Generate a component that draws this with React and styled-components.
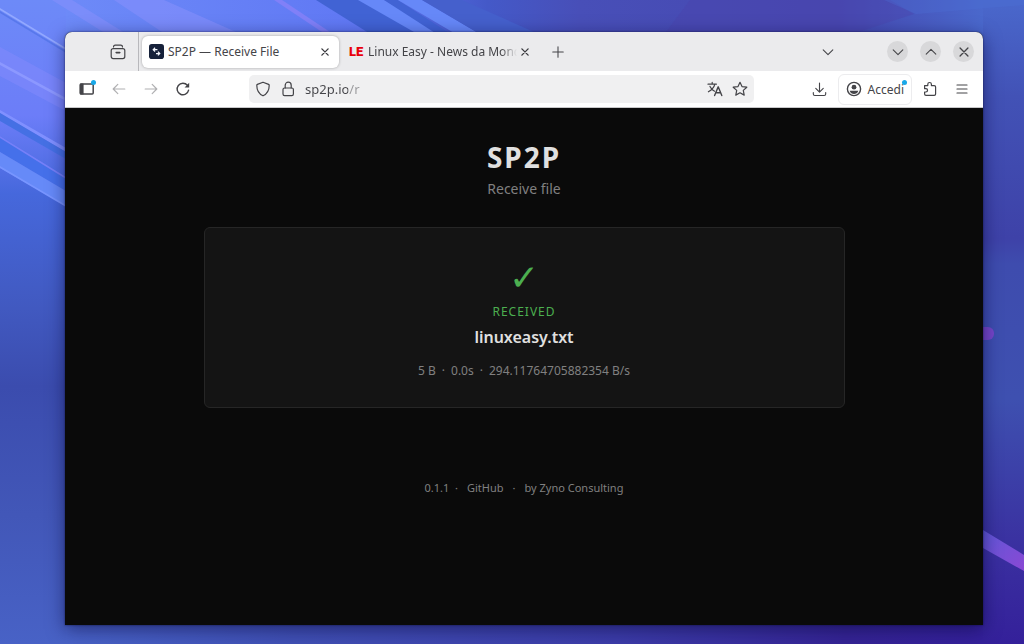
import React from "react";
import styled, { createGlobalStyle, css } from "styled-components";

const GlobalStyle = createGlobalStyle`
  * {
    box-sizing: border-box;
  }

  body {
    margin: 0;
    font-family: "Noto Sans", "Open Sans", sans-serif;
  }

  button,
  input {
    font-family: inherit;
  }
`;

export default function App() {
  return (
    <Desktop>
      <GlobalStyle />
      <Wallpaper />
      <BrowserWindow>
        <TabBar />
        <NavBar />
        <ReceivePage />
      </BrowserWindow>
    </Desktop>
  );
}

const TabBar = () => {
  return (
    <TabStrip>
      <RecentArea>
        <IconButton aria-label="Recent browsing">
          <Icon>
            <path d="M3.5 3q0-1.800 1.800-1.800h5.400q1.800 0 1.800 1.800" />
            <rect x="1.200" y="4.600" width="13.600" height="10" rx="2" />
            <path d="M6.200 8.600h3.600" strokeWidth="1.600" />
          </Icon>
        </IconButton>
      </RecentArea>
      <Tab $active>
        <Favicon viewBox="0 0 16 16">
          <rect width="16" height="16" rx="3" fill="#16213a" />
          <path
            d="M4.500 6h4.500M6.500 4l-2 2 2 2M11.500 10.200H7.500M9.500 8.200l2 2-2 2"
            fill="none"
            stroke="#f2f4fa"
            strokeWidth="1.300"
          />
        </Favicon>
        <TabTitle>SP2P — Receive File</TabTitle>
        <CloseTab label="Close SP2P" />
      </Tab>
      <Tab>
        <LetterIcon>LE</LetterIcon>
        <TabTitle $faded>Linux Easy - News da Mond</TabTitle>
        <CloseTab label="Close Linux Easy" />
      </Tab>
      <IconButton aria-label="New tab">
        <Icon size={14}>
          <path d="M8 2v12M2 8h12" />
        </Icon>
      </IconButton>
      <TabTools>
        <IconButton aria-label="List all tabs">
          <Icon size={14}>
            <path d="M2.500 5.500L8 11l5.500-5.500" />
          </Icon>
        </IconButton>
        <WindowButtons>
          <WindowButton aria-label="Minimize">
            <Icon size={14}>
              <path d="M2.500 5.500L8 11l5.500-5.500" />
            </Icon>
          </WindowButton>
          <WindowButton aria-label="Maximize">
            <Icon size={14}>
              <path d="M2.500 10.500L8 5l5.500 5.500" />
            </Icon>
          </WindowButton>
          <WindowButton aria-label="Close window">
            <Icon size={14}>
              <path d="M3.500 3.500l9 9M12.500 3.500l-9 9" strokeWidth="1.500" />
            </Icon>
          </WindowButton>
        </WindowButtons>
      </TabTools>
    </TabStrip>
  );
};

const CloseTab = ({ label }) => {
  return (
    <CloseButton aria-label={label}>
      <Icon size={10}>
        <path d="M3 3l10 10M13 3L3 13" strokeWidth="2.200" />
      </Icon>
    </CloseButton>
  );
};

const NavBar = () => {
  return (
    <Toolbar>
      <NavGroup>
        <IconButton aria-label="Sidebar">
          <Icon>
            <rect x="1.200" y="3" width="13" height="10" rx="1" strokeWidth="1.500" />
            <path d="M1.500 3h2.500v10H1.500z" fill="currentColor" />
          </Icon>
          <Dot />
        </IconButton>
        <IconButton aria-label="Back" disabled>
          <Icon>
            <path d="M13.800 8H2.200M6.800 3.400L2.200 8l4.600 4.600" />
          </Icon>
        </IconButton>
        <IconButton aria-label="Forward" disabled>
          <Icon>
            <path d="M2.200 8h11.600M9.200 3.400L13.800 8l-4.600 4.600" />
          </Icon>
        </IconButton>
        <IconButton aria-label="Reload">
          <Icon>
            <path d="M13.600 9.200A5.800 5.800 0 1 1 12.400 4.300" strokeWidth="1.400" />
            <path d="M14.200 1.800v4.600H9.600z" fill="currentColor" stroke="none" />
          </Icon>
        </IconButton>
      </NavGroup>
      <UrlBar>
        <Icon>
          <path d="M8 1.200l5.600 2.200q.6.3.6 1C14.200 9 12 12.800 8 14.800 4 12.800 1.800 9 1.800 4.400q0-.7.6-1z" />
        </Icon>
        <Icon>
          <rect x="3" y="7" width="10.400" height="7.600" rx="1.600" />
          <path d="M5.200 7V4.200a3 3 0 0 1 6 0V7" />
        </Icon>
        <UrlInput aria-label="Address" defaultValue="sp2p.io/r" />
        <Icon>
          <path d="M1 3.200h8.400M5.200 1.400v1.800M7.800 3.400C7 6.600 4.600 9 1.400 10.800M3 5.400c1 2.200 2.600 3.800 4.600 4.800" />
          <path d="M7.600 14.600l3.600-8.800 3.600 8.800M8.800 11.800h4.800" strokeWidth="1.400" />
        </Icon>
        <Icon>
          <path d="M8 1.300l2 4.300 4.800.6-3.500 3.200.9 4.700L8 11.800l-4.200 2.300.9-4.700L1.200 6.200 6 5.600z" />
        </Icon>
      </UrlBar>
      <NavTools>
        <IconButton aria-label="Downloads">
          <Icon size={15}>
            <path d="M8 1v9.500M4 6.800l4 4 4-4M1.400 11.200v1.600q0 1.600 1.600 1.600h10q1.600 0 1.600-1.600v-1.600" />
          </Icon>
        </IconButton>
        <AccountButton>
          <Icon>
            <circle cx="8" cy="8" r="6.600" strokeWidth="1.400" />
            <circle cx="8" cy="6.200" r="2.400" fill="currentColor" stroke="none" />
            <path d="M3.600 9.800h8.800Q11 13 8 13T3.600 9.800z" fill="currentColor" stroke="none" />
          </Icon>
          Accedi
          <Dot />
        </AccountButton>
        <IconButton aria-label="Extensions">
          <Icon>
            <path d="M2.600 4.600h3.200V3.300a1.800 1.800 0 0 1 3.600 0v1.300h2.800q1.400 0 1.400 1.400v7q0 1.400-1.400 1.400H4Q2.600 14.400 2.600 13v-2h1.300a1.600 1.600 0 0 0 0-3.300H2.600z" />
          </Icon>
        </IconButton>
        <IconButton aria-label="Menu">
          <Icon>
            <path d="M3 4h10M3 8h10M3 12h10" />
          </Icon>
        </IconButton>
      </NavTools>
    </Toolbar>
  );
};

const ReceivePage = () => {
  return (
    <Page>
      <Title>SP2P</Title>
      <Subtitle>Receive file</Subtitle>
      <Card>
        <CheckMark>✓</CheckMark>
        <Status>Received</Status>
        <FileName>linuxeasy.txt</FileName>
        <Stats>
          <span>5 B</span>
          <span>·</span>
          <span>0.0s</span>
          <span>·</span>
          <span>294.11764705882354 B/s</span>
        </Stats>
      </Card>
      <Footer>
        <span>0.1.1 &nbsp;·</span>
        <FooterLink href="#github">GitHub</FooterLink>
        <span>·</span>
        <FooterLink href="#zyno">by Zyno Consulting</FooterLink>
      </Footer>
    </Page>
  );
};

const Wallpaper = () => {
  return (
    <Backdrop viewBox="0 0 1024 644" preserveAspectRatio="none" aria-hidden="true">
      <defs>
        <linearGradient id="left" x1="0" y1="0" x2="0" y2="1">
          <stop offset="0" stopColor="#6d8af8" />
          <stop offset="0.18" stopColor="#6c7df8" />
          <stop offset="0.3" stopColor="#4668dc" />
          <stop offset="0.48" stopColor="#4159c0" />
          <stop offset="0.6" stopColor="#3b4cae" />
          <stop offset="0.8" stopColor="#4257b8" />
          <stop offset="1" stopColor="#4862c6" />
        </linearGradient>
        <linearGradient id="right" x1="0" y1="0" x2="0" y2="1">
          <stop offset="0" stopColor="#4a68cc" />
          <stop offset="0.15" stopColor="#4252b6" />
          <stop offset="0.37" stopColor="#3e42a8" />
          <stop offset="0.41" stopColor="#3e4cae" />
          <stop offset="0.62" stopColor="#3e50b0" />
          <stop offset="0.85" stopColor="#3a30a0" />
          <stop offset="1" stopColor="#34209a" />
        </linearGradient>
        <linearGradient id="top" x1="0" y1="0" x2="1" y2="0">
          <stop offset="0" stopColor="#6d8af8" />
          <stop offset="0.32" stopColor="#6078f4" />
          <stop offset="0.46" stopColor="#4459c8" />
          <stop offset="0.56" stopColor="#484fb8" />
          <stop offset="0.84" stopColor="#4648b0" />
          <stop offset="1" stopColor="#4a68cc" />
        </linearGradient>
        <linearGradient id="bottom" x1="0" y1="0" x2="1" y2="0">
          <stop offset="0" stopColor="#4862c6" />
          <stop offset="0.25" stopColor="#4050b4" />
          <stop offset="0.6" stopColor="#3c3ca8" />
          <stop offset="0.85" stopColor="#352494" />
          <stop offset="1" stopColor="#34209a" />
        </linearGradient>
        <linearGradient id="ray" x1="0" y1="0" x2="1" y2="1">
          <stop offset="0" stopColor="#5f58d8" />
          <stop offset="1" stopColor="#8a48d4" />
        </linearGradient>
      </defs>
      <rect width="512" height="644" fill="url(#left)" />
      <rect x="512" width="512" height="644" fill="url(#right)" />
      <rect x="66" width="917" height="60" fill="url(#top)" />
      <rect x="66" y="600" width="917" height="44" fill="url(#bottom)" />
      <path d="M316 0h44l70 40h-50z" fill="#4163d4" />
      <path d="M358 0h26l70 40h-26z" fill="#6688f8" />
      <path d="M384 0h14l62 40h-14z" fill="#4163d4" />
      <path d="M398 0h24l68 40h-24z" fill="#6688f8" />
      <path d="M422 0h40l90 40h-62z" fill="#4560cc" />
      <path d="M114 0h50l90 40h-80zM52 0h20l64 40h-20z" fill="#8590fc" opacity="0.6" />
      <path d="M274 0h8l60 40h-8z" fill="#8080f8" />
      <path d="M0 8l66 40v2L0 10z" fill="#92a8ff" />
      <path d="M0 11l66 40v2L0 13z" fill="#5878ec" />
      <path d="M0 47l66 36v28L0 76z" fill="#8088fc" opacity="0.6" />
      <path d="M0 62l66 36v3L0 65z" fill="#8c98ff" />
      <path d="M0 110l66 38v4L0 113z" fill="#8090ff" />
      <path d="M0 113l66 39v7L0 121z" fill="#4570e4" />
      <path d="M0 136l66 41v14L0 152z" fill="#4570ea" />
      <path d="M0 136l66 41v2L0 138z" fill="#7680f8" />
      <path d="M0 152l66 39v15L0 168z" fill="#668af8" />
      <path d="M0 166l66 39v2L0 168z" fill="#7895ff" />
      <path d="M690 0h200l24 14-80 26H660z" fill="#4b43ac" opacity="0.4" />
      <path d="M1024 0v5l-108 9L884 0z" fill="#4c70d8" opacity="0.3" />
      <rect x="960" y="327" width="34" height="13" rx="6" fill="#7546c8" />
      <path d="M983 530l41 25v16l-41-23z" fill="url(#ray)" />
    </Backdrop>
  );
};

const Icon = ({ size = 16, children }) => {
  return (
    <IconSvg viewBox="0 0 16 16" $size={size} aria-hidden="true">
      {children}
    </IconSvg>
  );
};

const Desktop = styled.div`
  position: relative;
  min-height: 100vh;
  display: flex;
  padding: 32px 41px 19px 65px;
  overflow: hidden;
  background: #4159c0;
`;

const Backdrop = styled.svg`
  position: absolute;
  inset: 0;
  width: 100%;
  height: 100%;
`;

const BrowserWindow = styled.main`
  position: relative;
  flex: 1;
  min-width: 0;
  display: flex;
  flex-direction: column;
  border-radius: 7px 7px 0 0;
  overflow: hidden;
  background: #0a0a0a;
  box-shadow: 0 0 2px rgba(10, 10, 50, 0.8), 0 4px 18px rgba(10, 10, 60, 0.55);
`;

const IconSvg = styled.svg`
  flex: none;
  display: block;
  width: ${({ $size }) => $size}px;
  height: ${({ $size }) => $size}px;
  fill: none;
  stroke: currentColor;
  stroke-width: 1.2;
  stroke-linecap: round;
  stroke-linejoin: round;
`;

const IconButton = styled.button`
  position: relative;
  flex: none;
  display: flex;
  align-items: center;
  justify-content: center;
  width: 32px;
  height: 32px;
  padding: 0;
  border: 0;
  background: none;
  color: #444448;

  &:disabled {
    color: #b0b0b2;
  }
`;

const Dot = styled.span`
  position: absolute;
  top: 7px;
  right: 7px;
  width: 5px;
  height: 5px;
  border-radius: 50%;
  background: #18a8e8;
`;

const TabStrip = styled.header`
  display: flex;
  align-items: center;
  height: 39px;
  background: #ebebed;
`;

const RecentArea = styled.div`
  display: flex;
  align-items: center;
  justify-content: flex-end;
  width: 74px;
  height: 100%;
  margin-right: 3px;
  padding-right: 4px;
  border-right: 1px solid #b8b8bc;
`;

const Tab = styled.div`
  display: flex;
  align-items: center;
  flex: 0 1 197px;
  min-width: 0;
  height: 32px;
  margin-right: 3px;
  padding: 0 6px 0 7px;
  border-radius: 6px;
  color: #444448;

  ${({ $active }) =>
    $active &&
    css`
      background: #ffffff;
      box-shadow: 0 0 3px rgba(0, 0, 0, 0.3);
    `}
`;

const TabTitle = styled.span`
  flex: 1;
  min-width: 0;
  margin-left: 4px;
  overflow: hidden;
  white-space: nowrap;
  font-size: 12px;
  line-height: 20px;

  ${({ $faded }) =>
    $faded &&
    css`
      mask-image: linear-gradient(to left, transparent, #000 16px);
    `}
`;

const Favicon = styled.svg`
  flex: none;
  width: 15px;
  height: 15px;
`;

const LetterIcon = styled.span`
  flex: none;
  width: 15px;
  color: #e8000c;
  font-family: Roboto, "Liberation Sans", sans-serif;
  font-size: 13px;
  font-weight: 900;
  line-height: 16px;
`;

const CloseButton = styled.button`
  flex: none;
  display: flex;
  align-items: center;
  justify-content: center;
  width: 16px;
  height: 16px;
  padding: 0;
  border: 0;
  background: none;
  color: #3c3c40;
`;

const TabTools = styled.div`
  display: flex;
  align-items: center;
  gap: 43px;
  margin-left: auto;
  padding-right: 9px;
`;

const WindowButtons = styled.div`
  display: flex;
  gap: 12px;
`;

const WindowButton = styled.button`
  display: flex;
  align-items: center;
  justify-content: center;
  width: 21px;
  height: 21px;
  padding: 0;
  border: 0;
  border-radius: 50%;
  background: #d8d8da;
  color: #444448;
`;

const Toolbar = styled.nav`
  display: flex;
  align-items: center;
  height: 37px;
  padding: 0 5px 0 6px;
  border-bottom: 1px solid #c8c8ca;
  background: #ffffff;
`;

const NavGroup = styled.div`
  display: flex;
`;

const UrlBar = styled.div`
  flex: 1;
  min-width: 0;
  display: flex;
  align-items: center;
  gap: 9px;
  height: 28px;
  margin: 0 50px;
  padding: 0 6px;
  border-radius: 5px;
  background: #f0f0f1;
  color: #444448;
`;

/* the path part of the address is dimmed after the host name */
const UrlInput = styled.input`
  flex: 1;
  min-width: 0;
  height: 20px;
  padding: 0;
  border: 0;
  outline: 0;
  background: linear-gradient(to right, #444448 43px, #97979a 43px);
  background-clip: text;
  color: transparent;
  font-size: 13px;
`;

const NavTools = styled.div`
  display: flex;
  align-items: center;
`;

const AccountButton = styled.button`
  position: relative;
  display: flex;
  align-items: center;
  gap: 6px;
  height: 31px;
  margin: 0 2px;
  padding: 0 7px;
  border: 1px solid #ececee;
  border-radius: 6px;
  background: #ffffff;
  color: #444448;
  font-size: 12px;

  ${Dot} {
    top: 5px;
    right: 4px;
  }
`;

const Page = styled.section`
  flex: 1;
  display: flex;
  flex-direction: column;
  align-items: center;
  padding: 32px 16px;
  background: #0a0a0a;
  color: #e0e0e0;
`;

const Title = styled.h1`
  margin: 0;
  font-size: 28px;
  font-weight: 700;
  letter-spacing: 2px;
  line-height: 34px;
`;

const Subtitle = styled.p`
  margin: 3px 0 0;
  color: #808080;
  font-size: 14px;
  line-height: 24px;
`;

const Card = styled.section`
  display: flex;
  flex-direction: column;
  align-items: center;
  width: 100%;
  max-width: 641px;
  margin-top: 26px;
  padding: 28px 24px 24px;
  border: 1px solid #262626;
  border-radius: 6px;
  background: #141414;
`;

const CheckMark = styled.div`
  color: #4caf50;
  font-family: "DejaVu Sans", sans-serif;
  font-size: 36px;
  line-height: 44px;
`;

const Status = styled.div`
  color: #4caf50;
  font-size: 12px;
  letter-spacing: 1px;
  line-height: 24px;
  text-transform: uppercase;
`;

const FileName = styled.div`
  font-size: 16px;
  font-weight: 600;
  line-height: 26px;
`;

const Stats = styled.div`
  display: flex;
  gap: 6px;
  margin-top: 9px;
  color: #808080;
  font-size: 12px;
  line-height: 24px;
`;

const Footer = styled.footer`
  display: flex;
  gap: 9px;
  margin-top: 68px;
  color: #808080;
  font-size: 11px;
  line-height: 24px;
`;

const FooterLink = styled.a`
  color: inherit;
  text-decoration: none;
`;
